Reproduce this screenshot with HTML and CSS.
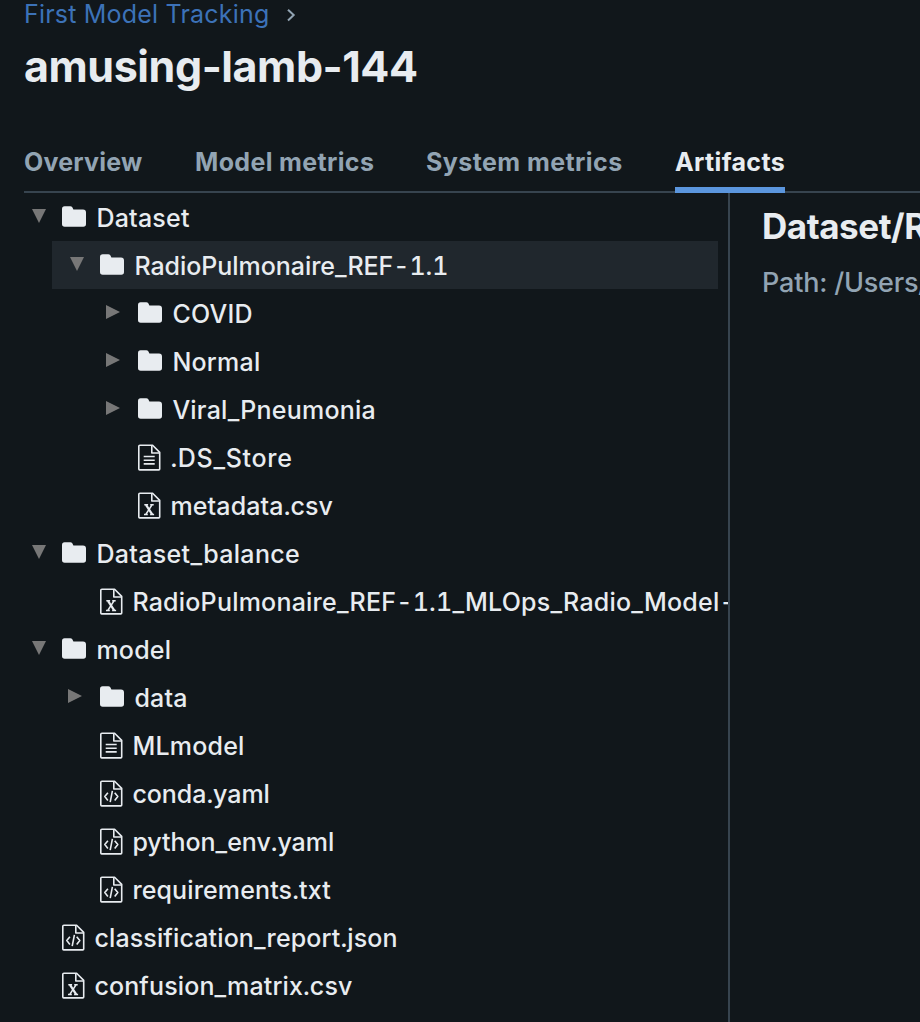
FILE: index.html
```html
<!DOCTYPE html>
<html lang="en">
<head>
<meta charset="utf-8">
<title>amusing-lamb-144</title>
<link rel="stylesheet" href="styles.css">
</head>
<body>
<svg class="sprite" aria-hidden="true">
  <symbol id="down" viewBox="0 0 14 14"><path d="M0 0h14L7 14z"/></symbol>
  <symbol id="right" viewBox="0 0 14 14"><path d="M0 0l14 7-14 7z"/></symbol>
  <symbol id="folder" viewBox="0 0 24 21"><path d="M2.600.300H8.200Q9.600.300 10.300 1.300L11.400 3.600H21Q24 3.600 24 6.600V18Q24 20.800 21.300 20.800H2.700Q0 20.800 0 18V2.900Q0 .300 2.600.300z"/></symbol>
  <symbol id="page" viewBox="0 0 23 27"><path d="M1.900 1.300H14.600L21.700 8.400V25Q21.700 25.900 20.800 25.900H1.700Q.8 25.900.8 25V2.300Q.8 1.300 1.900 1.300z"/><path d="M13.800 1.400v7.600h7.800"/></symbol>
  <symbol id="text" viewBox="0 0 23 27"><use href="#page"/><path d="M5.700 12.500h11M5.700 16.200h11M5.700 19.900h11"/></symbol>
  <symbol id="table" viewBox="0 0 23 27"><use href="#page"/><path class="heavy" d="M8 12.900l6.200 9.500"/><path d="M14 12.900L7.800 22.400M6.300 12.800h3.800M12.200 12.800h3.500M6 22.500h3.800M12.100 22.500h4"/></symbol>
  <symbol id="code" viewBox="0 0 23 27"><use href="#page"/><path d="M7.900 12.700L4.800 16.600l3.100 3.900M14.700 12.700l3.100 3.900-3.100 3.900M12.400 10.900L10.200 22.200"/></symbol>
</svg>
<div class="app">
  <header class="header">
    <nav class="breadcrumb"><a class="crumb">First Model Tracking</a><svg class="chevron" viewBox="0 0 10 14"><path d="M2 1.700l5.700 5.400L2 12.500"/></svg></nav>
    <h1 class="title">amusing-lamb-144</h1>
  </header>
  <nav class="tabs">
    <a class="tab overview">Overview</a>
    <a class="tab model">Model metrics</a>
    <a class="tab system">System metrics</a>
    <a class="tab active">Artifacts</a>
  </nav>
  <main class="main">
    <div class="tree">
      <div class="row"><span class="toggle"><svg class="down"><use href="#down"/></svg></span><svg class="folder"><use href="#folder"/></svg><span class="name">Dataset</span></div>
      <div class="row d1 selected"><span class="toggle"><svg class="down"><use href="#down"/></svg></span><svg class="folder"><use href="#folder"/></svg><span class="name tight">RadioPulmonaire_REF-1.1</span></div>
      <div class="row d2"><span class="toggle"><svg><use href="#right"/></svg></span><svg class="folder"><use href="#folder"/></svg><span class="name">COVID</span></div>
      <div class="row d2"><span class="toggle"><svg><use href="#right"/></svg></span><svg class="folder"><use href="#folder"/></svg><span class="name">Normal</span></div>
      <div class="row d2"><span class="toggle"><svg><use href="#right"/></svg></span><svg class="folder"><use href="#folder"/></svg><span class="name">Viral_Pneumonia</span></div>
      <div class="row d2"><span class="toggle"></span><svg class="file"><use href="#text"/></svg><span class="name widest">.DS_Store</span></div>
      <div class="row d2"><span class="toggle"></span><svg class="file"><use href="#table"/></svg><span class="name snug">metadata.csv</span></div>
      <div class="row"><span class="toggle"><svg class="down"><use href="#down"/></svg></span><svg class="folder"><use href="#folder"/></svg><span class="name loose">Dataset_balance</span></div>
      <div class="row d1"><span class="toggle"></span><svg class="file"><use href="#table"/></svg><span class="name">RadioPulmonaire_REF-1.1_MLOps_Radio_Model-</span></div>
      <div class="row"><span class="toggle"><svg class="down"><use href="#down"/></svg></span><svg class="folder"><use href="#folder"/></svg><span class="name">model</span></div>
      <div class="row d1"><span class="toggle"><svg><use href="#right"/></svg></span><svg class="folder"><use href="#folder"/></svg><span class="name">data</span></div>
      <div class="row d1"><span class="toggle"></span><svg class="file"><use href="#text"/></svg><span class="name">MLmodel</span></div>
      <div class="row d1"><span class="toggle"></span><svg class="file"><use href="#code"/></svg><span class="name tight">conda.yaml</span></div>
      <div class="row d1"><span class="toggle"></span><svg class="file"><use href="#code"/></svg><span class="name tight">python_env.yaml</span></div>
      <div class="row d1"><span class="toggle"></span><svg class="file"><use href="#code"/></svg><span class="name snug">requirements.txt</span></div>
      <div class="row"><span class="toggle"></span><svg class="file"><use href="#code"/></svg><span class="name snug">classification_report.json</span></div>
      <div class="row"><span class="toggle"></span><svg class="file"><use href="#table"/></svg><span class="name snug">confusion_matrix.csv</span></div>
    </div>
    <section class="detail">
      <h2 class="heading">Dataset/R</h2>
      <p class="path">Path: /Users/</p>
    </section>
  </main>
</div>
</body>
</html>
```
FILE: styles.css
```css
* { box-sizing: border-box; }
body { margin: 0; background: #11171b; color: #e8ecf0; font-family: Inter, "Liberation Sans", sans-serif; font-size: 25px; }
.sprite { position: absolute; width: 0; height: 0; }
.app { height: 1022px; overflow: hidden; display: flex; flex-direction: column; }
.header { height: 128px; padding-left: 24px; flex: none; }
.breadcrumb { display: flex; align-items: center; height: 28px; color: #3c72b8; letter-spacing: .2px; }
.crumb { width: 262px; white-space: nowrap; }
.chevron { width: 10px; height: 14px; margin-top: 2px; fill: none; stroke: #92a4b3; stroke-width: 2; }
.title { margin: 8px 0 0; font-size: 43px; line-height: 60px; font-weight: 650; letter-spacing: -.43px; }
.tabs { display: flex; height: 65px; flex: none; margin-left: 24px; border-bottom: 2px solid #37444f; color: #92a4b3; font-weight: 650; letter-spacing: .35px; }
.tab { height: 65px; line-height: 68px; white-space: nowrap; flex: none; }
.overview { width: 171px; letter-spacing: .2px; }
.model { width: 231px; }
.system { width: 249px; letter-spacing: .42px; }
.active { width: 110px; color: #e8ecf0; border-bottom: 6px solid #5b96de; }
.main { display: flex; flex: 1; min-height: 0; }
.tree { width: 730px; flex: none; border-right: 2px solid #37444f; overflow: hidden; }
.row { display: flex; height: 48px; padding-left: 30px; white-space: nowrap; }
.d1 { padding-left: 68px; }
.d2 { padding-left: 106px; }
.selected { margin: 0 10px 0 52px; padding-left: 16px; background: #20272d; }
.toggle { width: 32px; flex: none; padding-top: 16px; }
.toggle svg { display: block; width: 14px; height: 14px; fill: #777; }
.toggle .down { margin-left: 2px; }
.folder { width: 24px; height: 21px; margin: 13px 10.400px 0 0; flex: none; fill: #e8ecf0; }
.file { width: 23px; height: 27px; margin: 11px 9.400px 0 0; flex: none; fill: none; stroke: #e8ecf0; stroke-width: 1.6; stroke-linejoin: round; }
.heavy { stroke-width: 2.2; }
.name { line-height: 50px; font-weight: 450; letter-spacing: .22px; font-variant-numeric: tabular-nums; }
.tight { letter-spacing: -.04px; }
.snug { letter-spacing: .13px; }
.loose { letter-spacing: .33px; }
.widest { letter-spacing: .7px; }
.detail { flex: 1; min-width: 0; padding: 9px 0 0 32px; overflow: hidden; white-space: nowrap; }
.heading { margin: 0; font-size: 35px; line-height: 48px; font-weight: 650; letter-spacing: -.45px; }
.path { margin: 18px 0 0; font-size: 27px; line-height: 30px; font-weight: 450; letter-spacing: -.2px; color: #92a4b3; }
```
